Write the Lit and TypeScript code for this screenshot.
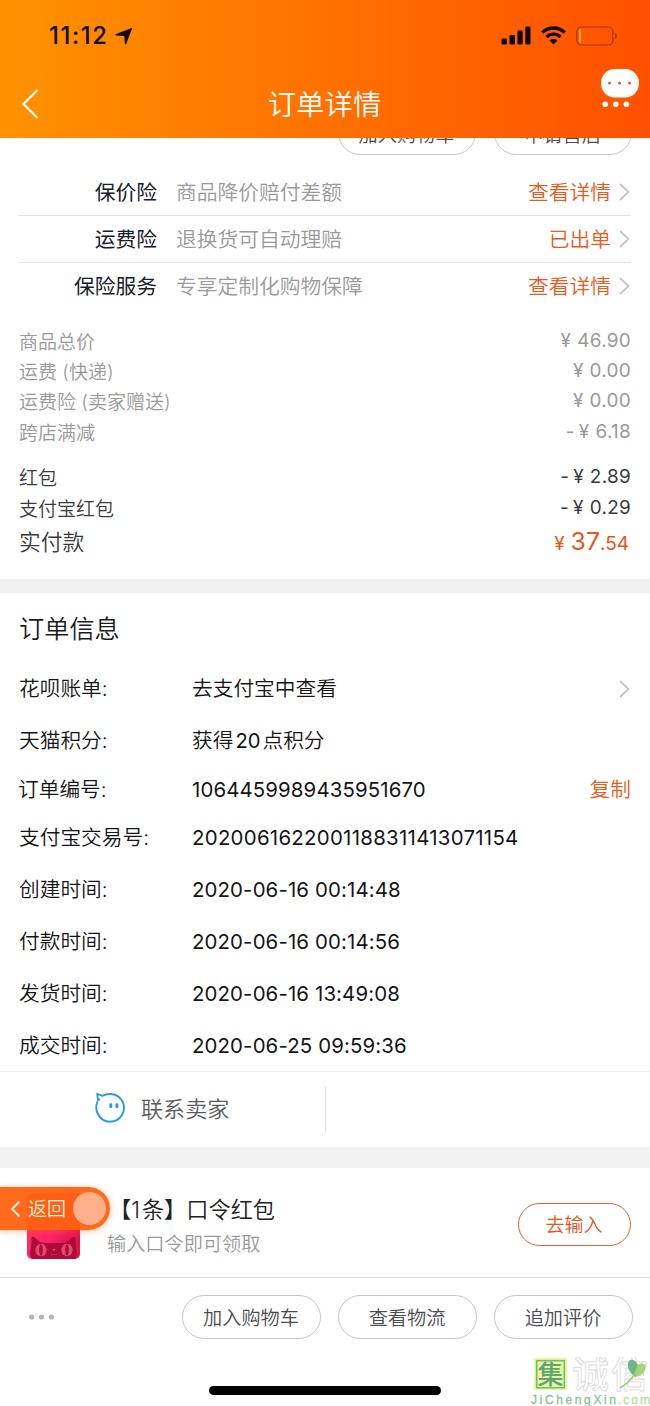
import { LitElement, html, css } from "lit";
import { customElement } from "lit/decorators.js";
import { classMap } from "lit/directives/class-map.js";

const insurance = [
  ["保价险", "商品降价赔付差额", "查看详情"],
  ["运费险", "退换货可自动理赔", "已出单"],
  ["保险服务", "专享定制化购物保障", "查看详情"],
];

const prices = [
  { label: "商品总价", minus: "", sum: "46.90", dark: false },
  { label: "运费 (快递)", minus: "", sum: "0.00", dark: false },
  { label: "运费险 (卖家赠送)", minus: "", sum: "0.00", dark: false },
  { label: "跨店满减", minus: "-", sum: "6.18", dark: false },
  { label: "红包", minus: "-", sum: "2.89", dark: true },
  { label: "支付宝红包", minus: "-", sum: "0.29", dark: true },
];

const chevron = html`<svg class="chev" width="12" height="20" viewBox="0 0 12 20">
  <path d="M1 2 L9.5 10 L1 18" fill="none" stroke="#c4c4c4" stroke-width="1.8" />
</svg>`;

@customElement("app-root")
export class AppRoot extends LitElement {
  static styles = css`
    :host {
      display: block;
      position: relative;
      width: 650px;
      height: 1406px;
      overflow: hidden;
      background: #fff;
      color: #1c1c1e;
      font-family: "Inter", "Noto Sans CJK SC", sans-serif;
      font-weight: 350;
      white-space: nowrap;
    }
    * { box-sizing: border-box; }
    svg { display: block; flex: none; }
    .header {
      height: 138px;
      background: linear-gradient(90deg, #ff9200 0%, #ff7200 48%, #ff5000 100%);
    }
    .status {
      display: flex;
      justify-content: space-between;
      height: 70px;
      padding: 1px 33px 0 49px;
      align-items: center;
      color: #110800;
    }
    .clock { display: flex; align-items: center; gap: 6px; font-size: 23.8px; font-weight: 550; letter-spacing: 1.6px; }
    .signals { display: flex; align-items: center; gap: 10px; }
    .nav {
      display: grid;
      grid-template-columns: 60px 1fr 60px;
      height: 68px;
      align-items: center;
      color: #fff;
    }
    .back { padding-left: 21px; }
    .title { text-align: center; font-size: 28.4px; line-height: 40px; padding-right: 1px; margin-top: 1px; }
    .chat { margin: -30px 0 0 11px; }
    .clip {
      display: flex;
      justify-content: flex-end;
      align-items: flex-end;
      gap: 18px;
      height: 17px;
      overflow: hidden;
      padding-right: 18px;
    }
    .pill {
      display: flex;
      flex: none;
      align-items: center;
      justify-content: center;
      width: 139px;
      height: 44px;
      padding: 1px 1px 0 0;
      border: 1px solid #c6c6c6;
      border-radius: 22px;
      font-size: 19.2px;
      line-height: 28px;
      color: #4c4c50;
    }
    .clip .pill { width: 138px; padding-top: 3px; }
    .pill.hot { width: 113px; height: 43px; margin-top: 3px; padding-top: 3px; border-color: #e4602f; color: #e8561a; font-size: 19px; }
    .ins { padding: 14px 19px 0; }
    .insrow {
      display: grid;
      grid-template-columns: 138px 1fr auto 12px;
      align-items: center;
      height: 47px;
      border-bottom: 1px solid #e2e2e2;
      font-size: 20.75px;
      line-height: 30px;
    }
    .insrow span { padding-top: 2px; }
    .insrow:last-child { border-bottom-color: transparent; }
    .insname { text-align: right; color: #15202c; font-weight: 400; }
    .insdesc { padding-left: 19px; color: #999; }
    .insact { color: #ec5a1a; padding-right: 8px; }
    .orange { color: #ec5a1a; }
    .sums { padding: 15px 19px 0; height: 269px; }
    .sum {
      display: flex;
      justify-content: space-between;
      align-items: center;
      height: 30.4px;
      font-size: 19px;
      color: #999;
    }
    .sum.dark { color: #3a3a3c; }
    .sum:nth-child(5) { margin-top: 15px; }
    .amt { display: flex; align-items: baseline; letter-spacing: 0.3px; font-size: 18.9px; font-weight: 400; }
    .yen { margin-right: 6px; margin-left: 4px; }
    .total { display: flex; justify-content: space-between; align-items: center; height: 36px; font-size: 21.8px; color: #3a3a3c; }
    .grand { display: flex; align-items: baseline; color: #e8561a; font-size: 19px; font-weight: 400; padding: 2px 2px 0 0; }
    .big { font-size: 24.8px; }
    .band { height: 14px; background: #f0f0f0; }
    .info { height: 478px; padding: 16px 19px 0; }
    .h { height: 40px; font-size: 25.2px; line-height: 40px; }
    .row {
      display: grid;
      grid-template-columns: 173px 1fr auto;
      align-items: center;
      height: 52px;
      font-size: 20.7px;
      line-height: 30px;
      color: #151517;
    }
    .row.first { margin-top: 14px; }
    .row.short { height: 45px; }
    .row.short span:first-child { margin-left: -1px; }
    .num { font-size: 20.4px; letter-spacing: 0.13px; font-weight: 400; }
    .row.long .num { letter-spacing: 0.29px; }
    .pts { margin: 0 2px; font-weight: 400; font-size: 20.2px; }
    .contact { display: flex; align-items: center; height: 76px; border-top: 1px solid #ececec; }
    .seller {
      display: flex;
      align-items: center;
      gap: 15px;
      width: 326px;
      height: 45px;
      padding: 0 0 3px 94px;
      border-right: 1px solid #e2e2e2;
      font-size: 22.1px;
      line-height: 30px;
      color: #5c5c60;
    }
    .seller span { margin-top: 1px; }
    .band.wide { height: 21px; background: #f2f2f2; }
    .promo {
      display: flex;
      align-items: center;
      height: 110px;
      padding: 0 19px 0 27px;
      border-bottom: 1px solid #dedede;
    }
    .cat { margin-top: 6px; }
    .ptext { flex: 1; padding: 8px 0 0 27px; }
    .ptitle { font-size: 22.2px; line-height: 34px; padding-left: 2px; color: #222; }
    .one { margin: 0 2px 0 0; }
    .psub { font-size: 19.2px; line-height: 34px; color: #999; }
    .bar { display: flex; align-items: center; gap: 17px; padding: 17px 17px 0 28px; }
    .more { flex: 1; }
    .home { width: 232px; height: 9px; margin: 47px auto 0 209px; border-radius: 5px; background: #000; }
    .float {
      position: absolute;
      left: 0;
      top: 1187px;
      display: flex;
      align-items: center;
      width: 110px;
      height: 43px;
      padding-left: 10px;
      border-radius: 0 22px 22px 0;
      background: rgba(255, 98, 16, 0.95);
      box-shadow: 0 1px 6px rgba(255, 90, 20, 0.45);
      color: #fff0d8;
      font-size: 19px;
    }
    .ftxt { margin: -2px 0 0 7px; width: 45px; }
    .knob { width: 33px; height: 33px; border-radius: 50%; background: #ffb08a; }
    .mark { position: absolute; left: 530px; top: 1357px; width: 120px; height: 49px; }
    .m1, .m2 { font-family: "Noto Sans CJK SC", sans-serif; }
    .m1 { font-size: 26px; font-weight: 500; fill: #5fa578; }
    .m2 { font-size: 37px; font-weight: 500; fill: #fff; stroke: #d9d9d9; stroke-width: 0.8px; }
    .m3 { font-family: "Liberation Sans", sans-serif; font-size: 12px; font-weight: 400; stroke-width: 0.3px; }
  `;

  private row(label: string, value: unknown, end: unknown = "", mod = "", num = false) {
    return html`<div class="row ${mod}">
      <span>${label}</span><span class=${classMap({ num })}>${value}</span><span class="orange">${end}</span>
    </div>`;
  }

  render() {
    return html`
      <header class="header">
        <div class="status">
          <div class="clock">
            <span>11:12</span>
            <svg width="18" height="18" viewBox="0 0 18 18"><path d="M17.3 0.7 L11.2 17 Q10.3 18 9.8 16.6 L9.3 9.1 L1.3 8.6 Q-0.1 7.9 1.1 7.1 Z" fill="#110800" /></svg>
          </div>
          <div class="signals">
            <svg width="30" height="19" viewBox="0 0 30 19" fill="#110500">
              <rect x="0.5" y="12.5" width="5.5" height="6" rx="1.3" /><rect x="8.5" y="9" width="5.5" height="9.5" rx="1.3" />
              <rect x="16.5" y="4.5" width="5.2" height="14" rx="1.3" /><rect x="24.3" y="0.5" width="5.2" height="18" rx="1.3" />
            </svg>
            <svg width="25" height="19" viewBox="0 0 25 19" fill="none" stroke="#110500" stroke-width="3.4">
              <path d="M1.2 6.6 A16 16 0 0 1 23.8 6.6" /><path d="M5.5 11 A10 10 0 0 1 19.5 11" />
              <path d="M8.5 14.4 A5.8 5.8 0 0 1 16.5 14.4 L12.5 18.6 Z" fill="#110500" stroke="none" />
            </svg>
            <svg width="41" height="20" viewBox="0 0 41 20">
              <rect x="0.8" y="1" width="36" height="18" rx="4.6" fill="none" stroke="#a83405" stroke-width="1.2" />
              <rect x="3" y="3.5" width="2" height="13" rx="1" fill="#ffb400" />
              <path d="M39 7 Q41 8 41 10 Q41 12 39 13 Z" fill="#a83405" />
            </svg>
          </div>
        </div>
        <div class="nav">
          <div class="back"><svg width="18" height="30" viewBox="0 0 18 30"><path d="M16.5 1 L2.5 15 L16.5 29" fill="none" stroke="#fff" stroke-width="2.2" /></svg></div>
          <div class="title">订单详情</div>
          <svg class="chat" width="39" height="40" viewBox="0 0 39 40">
            <rect x="0" y="0" width="38" height="28.5" rx="14" fill="#fff" />
            <g fill="#e8561a"><circle cx="8.6" cy="14.2" r="1.4" /><circle cx="18.6" cy="14.2" r="1.4" /><circle cx="28.6" cy="14.2" r="1.4" /></g>
            <g fill="#fff"><circle cx="4.2" cy="35.2" r="2.8" /><circle cx="14.8" cy="35.2" r="2.8" /><circle cx="25.4" cy="35.2" r="2.8" /></g>
          </svg>
        </div>
      </header>
      <div class="clip"><span class="pill">加入购物车</span><span class="pill">申请售后</span></div>
      <section class="ins">
        ${insurance.map(
          ([n, d, a]) => html`<div class="insrow">
            <span class="insname">${n}</span><span class="insdesc">${d}</span><span class="insact">${a}</span>${chevron}
          </div>`
        )}
      </section>
      <section class="sums">
        ${prices.map(
          (p) => html`<div class=${classMap({ sum: true, dark: p.dark })}>
            <span>${p.label}</span>
            <span class="amt">${p.minus}<span class="yen">¥</span>${p.sum}</span>
          </div>`
        )}
        <div class="total"><span>实付款</span><span class="grand"><span class="yen">¥</span><span class="big">37</span>.54</span></div>
      </section>
      <div class="band"></div>
      <section class="info">
        <div class="h">订单信息</div>
        ${this.row("花呗账单:", "去支付宝中查看", chevron, "first")}
        ${this.row("天猫积分:", html`获得<span class="pts">20</span>点积分`)}
        ${this.row("订单编号:", "1064459989435951670", "复制", "short", true)}
        ${this.row("支付宝交易号:", "2020061622001188311413071154", "", "long", true)}
        ${this.row("创建时间:", "2020-06-16 00:14:48", "", "", true)}
        ${this.row("付款时间:", "2020-06-16 00:14:56", "", "", true)}
        ${this.row("发货时间:", "2020-06-16 13:49:08", "", "", true)}
        ${this.row("成交时间:", "2020-06-25 09:59:36", "", "", true)}
      </section>
      <section class="contact">
        <div class="seller">
          <svg width="32" height="32" viewBox="0 0 32 32">
            <path d="M3.4 9.5 Q1.2 16 3.4 21 Q7.3 29.6 16 29.8 Q23.5 29.7 27.8 23.4 Q31.6 17 29 10.5 Q25.3 2.6 17 2 Q11.7 1.8 8.6 3.8 L3.2 1.8 L4 8.2 L6 7.4" fill="none" stroke="#2b9ade" stroke-width="1.9" stroke-linejoin="round" />
            <g fill="#2b9ade"><ellipse cx="16.8" cy="13.7" rx="1.6" ry="2.6" /><ellipse cx="22.9" cy="13.7" rx="1.6" ry="2.6" /></g>
          </svg>
          <span>联系卖家</span>
        </div>
      </section>
      <div class="band wide"></div>
      <section class="promo">
        <svg class="cat" width="53" height="66" viewBox="0 0 53 66">
          <defs><linearGradient id="g" x1="0" y1="0.3" x2="0.6" y2="1"><stop offset="0" stop-color="#ff3d5c" /><stop offset="0.6" stop-color="#ff2468" /><stop offset="1" stop-color="#e0124a" /></linearGradient></defs>
          <rect width="53" height="66" rx="5" fill="url(#g)" />
          <path d="M5 66 Q2 62 4 55 L4.5 45 Q5.5 42 10 46.5 Q13 50 18 50 H35 Q40 50 43 46.5 Q47.5 42 48.5 45 L49 55 Q51 62 48 66 Z" fill="#b00a3a" />
          <g fill="#d9506c"><ellipse cx="14" cy="57" rx="5.6" ry="6.2" /><ellipse cx="40" cy="57" rx="5.6" ry="6.2" /></g>
          <g fill="#b00a3a"><ellipse cx="14" cy="57" rx="1.8" ry="5.8" /><ellipse cx="40" cy="57" rx="1.8" ry="5.8" /></g>
          <path d="M25.4 56 h3.2 l-1.6 2.2 Z M24 61 h6 v0.6 h-6 Z" fill="#d9506c" />
        </svg>
        <div class="ptext"><div class="ptitle">【<span class="one">1</span>条】口令红包</div><div class="psub">输入口令即可领取</div></div>
        <span class="pill hot">去输入</span>
      </section>
      <footer class="bar">
        <div class="more"><svg width="28" height="6" viewBox="0 0 28 6" fill="#b4b4b4"><circle cx="3.6" cy="3" r="2.6" /><circle cx="13.5" cy="3" r="2.6" /><circle cx="23.4" cy="3" r="2.6" /></svg></div>
        <span class="pill">加入购物车</span><span class="pill">查看物流</span><span class="pill">追加评价</span>
      </footer>
      <div class="home"></div>
      <div class="float">
        <svg width="11" height="18" viewBox="0 0 11 18"><path d="M9.5 1.5 L2 9 L9.5 16.5" fill="none" stroke="#fff0d8" stroke-width="2" /></svg>
        <span class="ftxt">返回</span><span class="knob"></span>
      </div>
      <svg class="mark" viewBox="0 0 120 49">
        <rect x="4" y="1" width="33" height="32" fill="#e9f89a" />
        <rect x="6.7" y="3.7" width="27.6" height="27" fill="none" stroke="#78b87c" stroke-width="1.6" />
        <text class="m1" x="7.5" y="27">集</text>
        <text class="m2" x="42" y="31" textLength="76">诚信</text>
        <path d="M105 20 Q95 11 99 4 Q103 0 108 8 Q113 4 116 9 Q116 18 105 20 Z" fill="#a5d67a" />
        <path d="M105 20 Q95 11 99 4 Q103 0 108 8 Z" fill="#6cb58a" />
        <path d="M108 9 Q104 23 90 31" fill="none" stroke="#9bd070" stroke-width="1.5" />
        <text class="m3" x="1" y="46.5" textLength="85" fill="#8fbd9a" stroke="#8fbd9a">JiChengXin</text>
        <text class="m3" x="88" y="46.5" textLength="32" fill="#b5dc9a" stroke="#b5dc9a">.com</text>
      </svg>
    `;
  }
}
